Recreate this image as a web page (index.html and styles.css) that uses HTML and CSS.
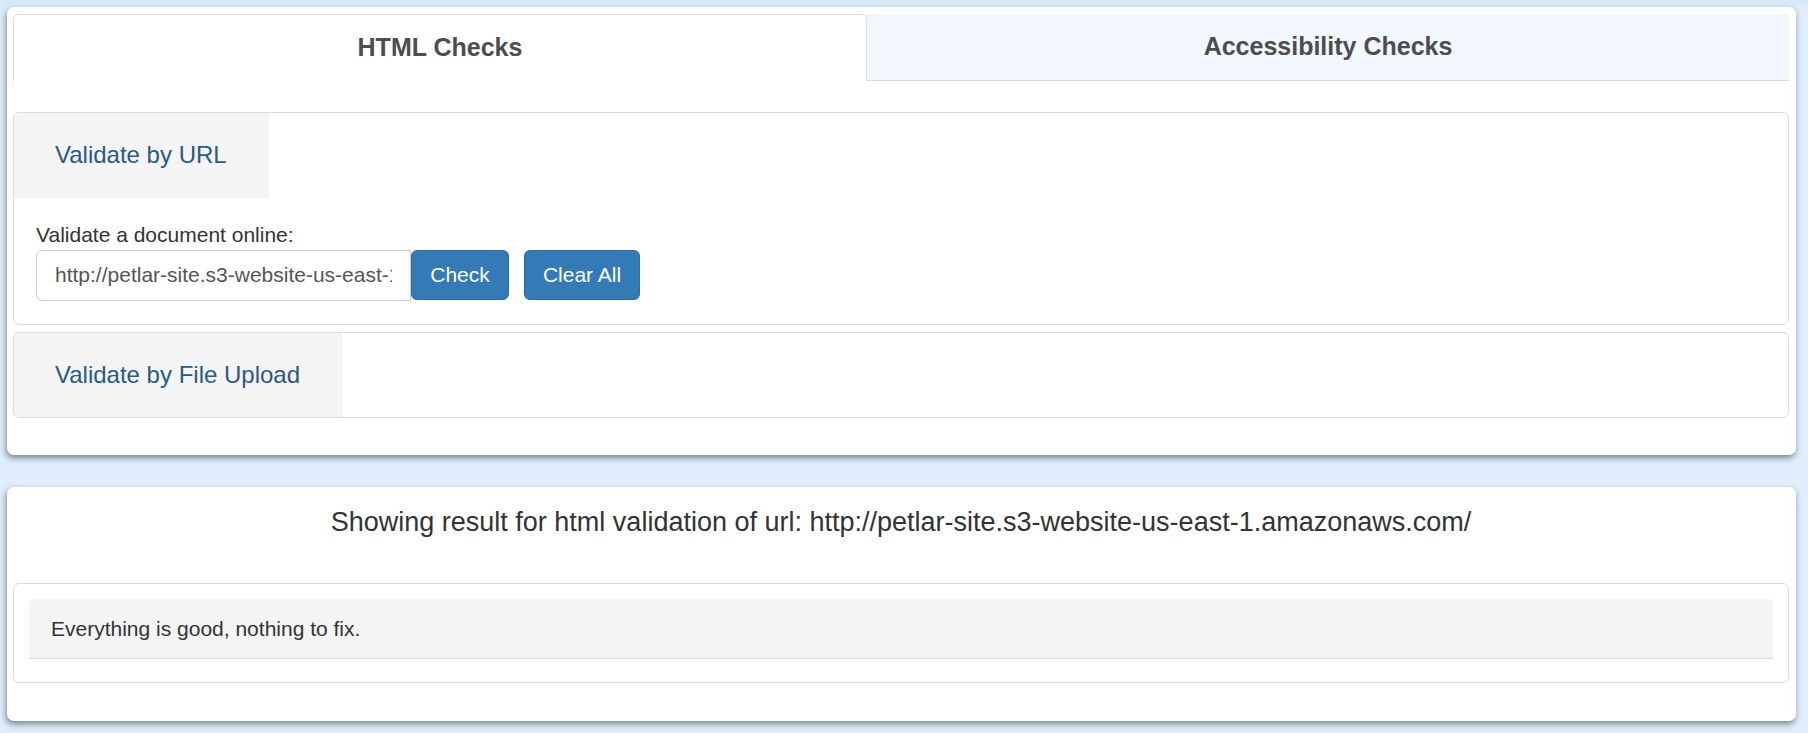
FILE: index.html
```html
<!DOCTYPE html>
<html lang="en">
<head>
<meta charset="utf-8">
<title>HTML Checks</title>
<link rel="stylesheet" href="styles.css">
</head>
<body>
<div class="page">
  <section class="card card-top">
    <div class="tabs">
      <div class="tab tab-active">HTML Checks</div>
      <div class="tab tab-inactive">Accessibility Checks</div>
    </div>
    <div class="panel panel-url">
      <div class="panel-heading"><span class="panel-title">Validate by URL</span></div>
      <div class="panel-body">
        <div class="field-label">Validate a document online:</div>
        <div class="form-row">
          <input class="url-input" type="text" value="http://petlar-site.s3-website-us-east-1.amazonaws.com/">
          <button class="btn btn-check">Check</button>
          <button class="btn btn-clear">Clear All</button>
        </div>
      </div>
    </div>
    <div class="panel panel-file">
      <div class="panel-heading"><span class="panel-title">Validate by File Upload</span></div>
    </div>
  </section>
  <section class="card card-result">
    <h4 class="result-title">Showing result for html validation of url: http://petlar-site.s3-website-us-east-1.amazonaws.com/</h4>
    <div class="panel result-panel">
      <div class="well">Everything is good, nothing to fix.</div>
    </div>
  </section>
</div>
</body>
</html>
```
FILE: styles.css
```css
html, body {
  margin: 0;
  padding: 0;
}
body {
  background: linear-gradient(#d7e8f6 0, #dfeefa 14px, #dfeefa 100%);
  font-family: "Liberation Sans", Arial, sans-serif;
  font-size: 21px;
  line-height: 1.42857;
  color: #333;
  height: 733px;
  overflow: hidden;
}
.page {
  padding: 7px 12px 0 7px;
}
.card {
  background: #fff;
  border-radius: 7px;
  box-shadow: -1px 3px 6px rgba(35, 45, 58, 0.55);
}
.card-top {
  padding: 7px 7px 37px 6px;
}
.card-result {
  margin-top: 32px;
  padding: 7px 7px 38px 6px;
}
.tabs {
  display: grid;
  grid-template-columns: 854px 1fr;
  height: 67px;
  margin-bottom: 31px;
}
.tab {
  display: flex;
  align-items: center;
  justify-content: center;
  font-weight: bold;
  font-size: 25px;
  color: #4d4d4d;
  box-sizing: border-box;
}
.tab-active {
  background: #fff;
  border: 1px solid #dcdcdc;
  border-bottom: none;
  border-radius: 5px 5px 0 0;
}
.tab-inactive {
  background: #f2f6fd;
  border-bottom: 1px solid #dcdcdc;
}
.panel {
  border: 1px solid #dcdcdc;
  border-radius: 6px;
  background: #fff;
  overflow: hidden;
}
.panel-file {
  margin-top: 7px;
}
.panel-heading {
  display: flex;
}
.panel-title {
  display: flex;
  align-items: center;
  height: 85px;
  padding: 0 42px 0 41px;
  background: #f4f4f4;
  color: #285a8a;
  font-size: 24px;
}
.panel-file .panel-title {
  height: 84px;
}
.panel-body {
  padding: 22px 22px 23px 22px;
}
.field-label {
  line-height: 29.7px;
}
.form-row {
  display: flex;
  align-items: center;
}
.url-input {
  box-sizing: border-box;
  width: 375px;
  height: 51px;
  padding: 0 18px;
  border: 1px solid #cccccc;
  border-radius: 6px 0 0 6px;
  font-family: "Liberation Sans", Arial, sans-serif;
  font-size: 21px;
  color: #555;
  background: #fff;
  outline: none;
  margin: 0;
}
.btn {
  box-sizing: border-box;
  height: 50px;
  padding: 0;
  white-space: nowrap;
  text-align: center;
  background: #337ab7;
  border: 1px solid #2e6da4;
  color: #fff;
  font-family: "Liberation Sans", Arial, sans-serif;
  font-size: 21px;
  border-radius: 6px;
  margin: 0;
}
.btn-check {
  width: 98px;
}
.btn-clear {
  width: 116px;
  margin-left: 15px;
}
.result-title {
  margin: 14px 0 46px;
  font-size: 27px;
  line-height: 29.4px;
  font-weight: normal;
  text-align: center;
  color: #333;
}
.result-panel {
  padding: 15px 15px 23px 15px;
}
.well {
  background: #f4f4f4;
  border-bottom: 1px solid #dcdcdc;
  border-radius: 5px 5px 0 0;
  padding: 15px 22px 14.5px 22px;
  line-height: 29.7px;
}
```
